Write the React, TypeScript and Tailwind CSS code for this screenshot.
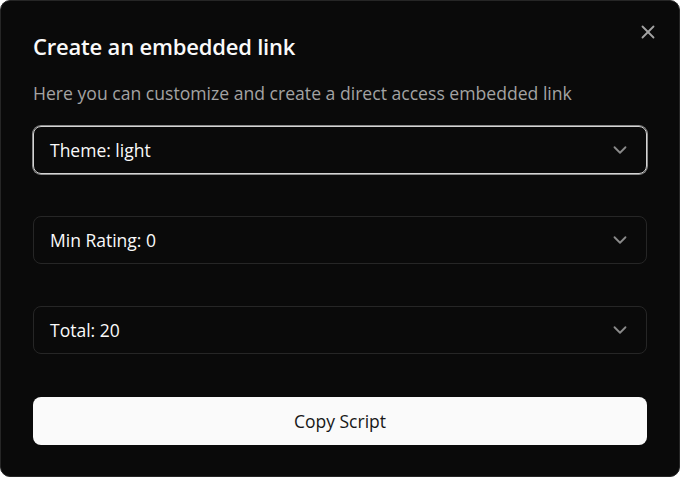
import { ChevronDown, X } from "lucide-react";

const selects = [
  { label: "Theme: light", focused: true },
  { label: "Min Rating: 0", focused: false },
  { label: "Total: 20", focused: false },
];

export default function App() {
  return (
    <div
      className="w-[680px] h-[477px] bg-[#0a0a0a] border border-[#262626] rounded-[10px] text-[#fafafa] relative"
      style={{ fontFamily: '"Open Sans", "Noto Sans", sans-serif' }}
    >
      <button className="absolute right-[20px] top-[20px] text-[#a3a3a3]">
        <X size={22} strokeWidth={2} />
      </button>

      <div className="flex flex-col px-8 pt-[31px]">
        <h2 className="text-[22px] leading-[28px] font-semibold tracking-[-0.2px]">
          Create an embedded link
        </h2>
        <p className="mt-[21px] text-[17.6px] leading-[24px] text-[#a3a3a3]">
          Here you can customize and create a direct access embedded link
        </p>

        <div className="mt-[21px] flex flex-col gap-[42px]">
          {selects.map((s) => (
            <div
              key={s.label}
              className={
                s.focused
                  ? "h-[48px] rounded-[8px] border border-[#d4d4d4] ring-1 ring-[#8a8a8a] flex items-center justify-between pl-4 pr-[15px]"
                  : "h-[48px] rounded-[8px] border border-[#262626] flex items-center justify-between pl-4 pr-[15px]"
              }
            >
              <span className="text-[17.5px]">{s.label}</span>
              <ChevronDown size={22} strokeWidth={2} className="text-[#8a8a8a]" />
            </div>
          ))}
          <button className="mt-px h-[48px] rounded-[8px] bg-[#fafafa] text-[#171717] text-[17.5px]">
            Copy Script
          </button>
        </div>
      </div>
    </div>
  );
}
